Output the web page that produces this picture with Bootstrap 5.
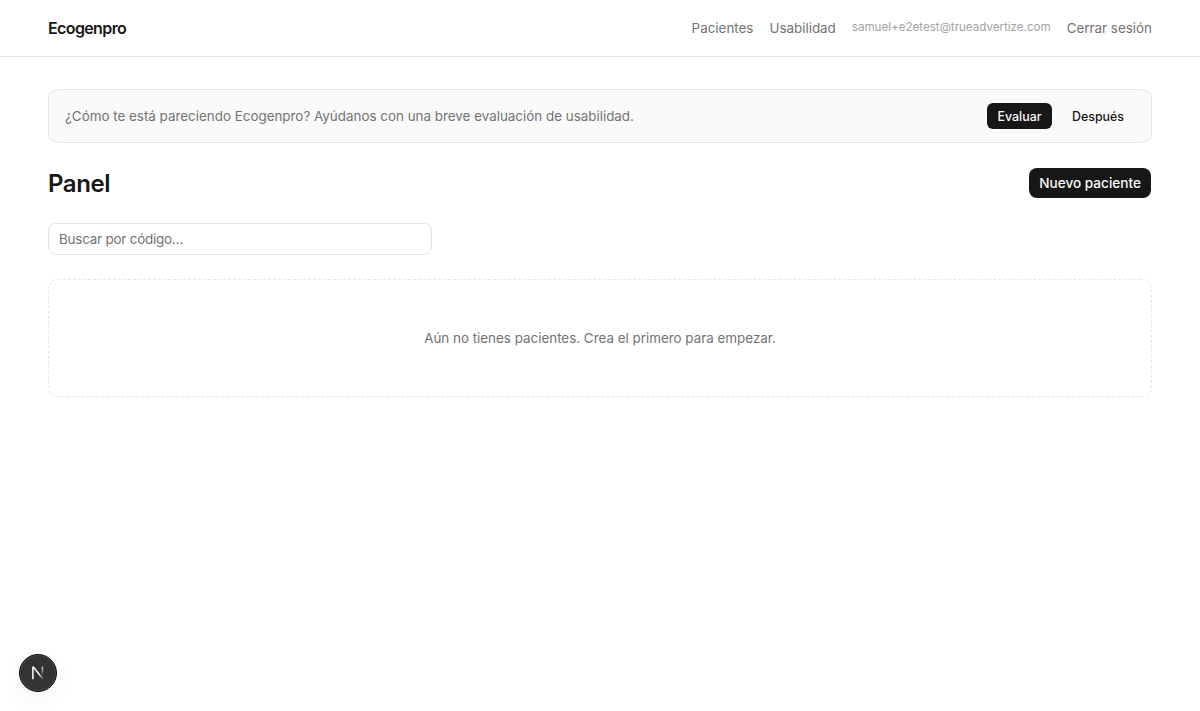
<!DOCTYPE html>
<html lang="es">
<head>
    <meta charset="UTF-8">
    <meta name="viewport" content="width=device-width, initial-scale=1.0">
    <title>Ecogenpro</title>
    <link href="https://cdn.jsdelivr.net/npm/bootstrap@5.3.0/dist/css/bootstrap.min.css" rel="stylesheet">
    <style>
        body {
            font-family: Inter, "Liberation Sans", sans-serif;
            color: #171717;
            background: #fff;
            min-height: 711px;
        }
        .top-bar {
            height: 57px;
            border-bottom: 1px solid #e5e5e5;
            padding: 0 48px;
        }
        .brand {
            font-size: 16px;
            font-weight: 600;
            letter-spacing: -0.62px;
            color: #171717;
            text-decoration: none;
        }
        .top-link {
            font-size: 13.4px;
            color: #737373;
            text-decoration: none;
        }
        .top-mail {
            font-size: 11.6px;
            color: #a3a3a3;
        }
        .page {
            padding: 32px 48px;
        }
        .notice {
            height: 54px;
            padding: 0 15px 0 16px;
            background: #fafafa;
            border: 1px solid #e5e5e5;
            border-radius: 10px;
            font-size: 13.4px;
            color: #737373;
        }
        .btn-dark-small, .btn-plain-small {
            font-size: 12.4px;
            font-weight: 500;
            line-height: 20px;
            padding: 4px 10.5px 2px;
            border: 0;
            border-radius: 6px;
        }
        .btn-dark-small { background: #171717; color: #fafafa; }
        .btn-plain-small { background: transparent; color: #171717; padding: 4px 12px 2px; }
        .title-row {
            margin: 25px 1px 25px 0;
        }
        .page-title {
            font-size: 24px;
            font-weight: 600;
            letter-spacing: -0.4px;
            line-height: 28px;
            padding-top: 2px;
            color: #171717;
        }
        .btn-new {
            font-size: 13.6px;
            font-weight: 500;
            line-height: 20px;
            padding: 5px 10px;
            background: #171717;
            color: #fafafa;
            border: 0;
            border-radius: 8px;
        }
        .search {
            width: 384px;
            height: 32px;
            padding: 0 10px;
            font-size: 13.4px;
            border: 1px solid #e5e5e5;
            border-radius: 8px;
        }
        .search::placeholder { color: #737373; opacity: 1; letter-spacing: -0.2px; }
        .empty {
            height: 118px;
            border: 1px dashed #e5e5e5;
            border-radius: 10px;
            font-size: 13.4px;
            color: #737373;
        }
        .dev-badge {
            position: fixed;
            left: 19px;
            bottom: 19px;
            width: 38px;
            height: 38px;
            border-radius: 50%;
            background: #333;
            border: 1px solid #111;
            box-shadow: 0 0 0 1px #484848 inset, 0 8px 24px rgba(0,0,0,.04);
        }
    </style>
</head>
<body>
    <header class="top-bar d-flex align-items-center justify-content-between">
        <a class="brand" href="#">Ecogenpro</a>
        <nav class="d-flex align-items-center gap-3">
            <a class="top-link" href="#">Pacientes</a>
            <a class="top-link" href="#">Usabilidad</a>
            <span class="top-mail">samuel+e2etest@trueadvertize.com</span>
            <a class="top-link" href="#">Cerrar sesión</a>
        </nav>
    </header>

    <main class="page">
        <div class="notice d-flex align-items-center justify-content-between">
            <span>¿Cómo te está pareciendo Ecogenpro? Ayúdanos con una breve evaluación de usabilidad.</span>
            <div class="d-flex align-items-center gap-2">
                <button type="button" class="btn-dark-small">Evaluar</button>
                <button type="button" class="btn-plain-small">Después</button>
            </div>
        </div>

        <div class="d-flex align-items-center justify-content-between title-row">
            <h1 class="page-title m-0">Panel</h1>
            <button type="button" class="btn-new">Nuevo paciente</button>
        </div>

        <input class="search d-block mb-4" type="text" placeholder="Buscar por código…">

        <div class="empty d-flex align-items-center justify-content-center">
            Aún no tienes pacientes. Crea el primero para empezar.
        </div>
    </main>

    <div class="dev-badge d-flex align-items-center justify-content-center">
        <svg width="16" height="16" viewBox="0 0 16 16" fill="none">
            <defs>
                <linearGradient id="diag" gradientUnits="userSpaceOnUse" x1="3" y1="2" x2="13" y2="14">
                    <stop offset="0" stop-color="#fff"/>
                    <stop offset="0.6" stop-color="#fff"/>
                    <stop offset="1" stop-color="#fff" stop-opacity="0.15"/>
                </linearGradient>
                <linearGradient id="stem" gradientUnits="userSpaceOnUse" x1="12" y1="2" x2="12" y2="10">
                    <stop offset="0" stop-color="#fff" stop-opacity="0.85"/>
                    <stop offset="1" stop-color="#fff" stop-opacity="0.1"/>
                </linearGradient>
            </defs>
            <path d="M2.9 14.2V2.2H3.6L13.2 14.4" stroke="url(#diag)" stroke-width="1.5"/>
            <path d="M12.4 1.8V10.5" stroke="url(#stem)" stroke-width="1.5"/>
        </svg>
    </div>

    <script src="https://cdn.jsdelivr.net/npm/bootstrap@5.3.0/dist/js/bootstrap.bundle.min.js"></script>
</body>
</html>
